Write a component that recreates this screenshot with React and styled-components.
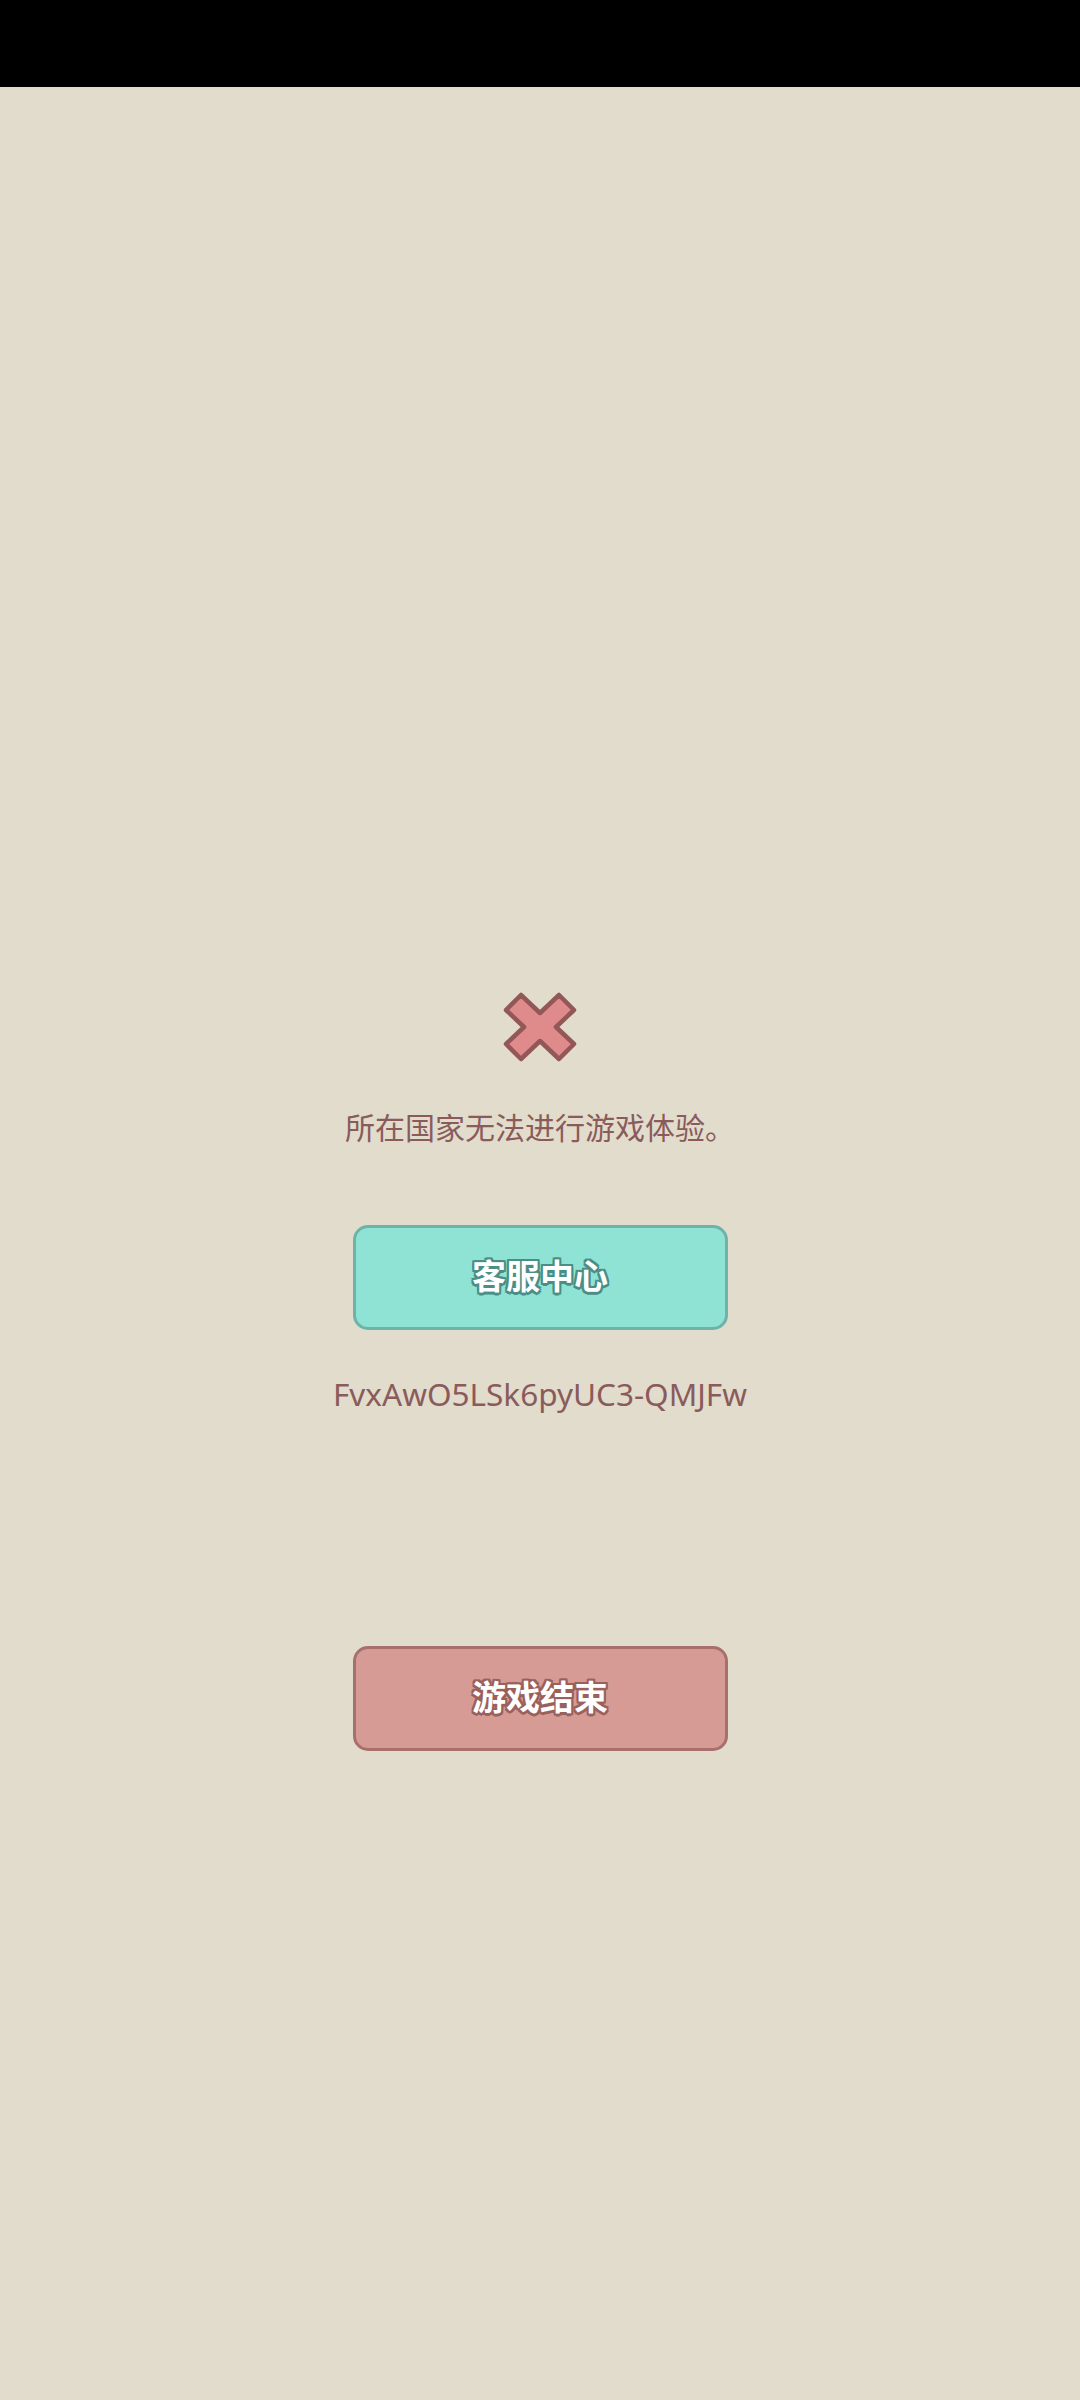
import styled, { createGlobalStyle } from 'styled-components'

const GlobalStyle = createGlobalStyle`
  html, body {
    margin: 0;
    padding: 0;
    background: #e2dccd;
  }
  body {
    font-family: "Noto Sans", "Noto Sans CJK SC", sans-serif;
  }
`

const Screen = styled.div`
  width: 1080px;
  height: 2400px;
  background: #e2dccd;
  display: flex;
  flex-direction: column;
  overflow: hidden;
`

const StatusBar = styled.div`
  height: 87px;
  background: #000;
  flex-shrink: 0;
`

const Content = styled.main`
  display: flex;
  flex-direction: column;
  align-items: center;
  padding-top: 903px;
`

const Message = styled.p`
  margin: 44px 0 0;
  font-family: "Noto Sans CJK SC", sans-serif;
  font-size: 30px;
  line-height: 36px;
  color: #8a5b5b;
`

const ActionButton = styled.button`
  box-sizing: border-box;
  width: 375px;
  height: 105px;
  margin-top: ${(p) => p.$top}px;
  padding: 0 0 7px;
  border: 3px solid ${(p) => p.$edge};
  border-radius: 15px;
  background: ${(p) => p.$fill};
  color: #fff;
  font-family: "Noto Sans CJK SC", sans-serif;
  font-weight: 700;
  font-size: 34px;
  cursor: pointer;
  display: flex;
  align-items: center;
  justify-content: center;
  text-shadow:
    2px 0 0 ${(p) => p.$ink}, -2px 0 0 ${(p) => p.$ink},
    0 2px 0 ${(p) => p.$ink}, 0 -2px 0 ${(p) => p.$ink},
    2px 2px 0 ${(p) => p.$ink}, -2px -2px 0 ${(p) => p.$ink},
    2px -2px 0 ${(p) => p.$ink}, -2px 2px 0 ${(p) => p.$ink},
    0 3px 0 ${(p) => p.$ink};
`

const DeviceId = styled.div`
  margin-top: 46px;
  font-family: "Noto Sans", sans-serif;
  font-size: 31.5px;
  line-height: 36px;
  color: #8a5b5b;
`

const CrossIcon = () => (
  <svg width="78" height="74" viewBox="0 0 78 74">
    <path
      d="M20 5 L39 23 L58 5 L73 20 L55 37 L73 54 L58 69 L39 51 L20 69 L5 54 L23 37 L5 20 Z"
      fill="#df8a8b"
      stroke="#935757"
      strokeWidth="4.5"
      strokeLinejoin="round"
    />
  </svg>
)

export default function App() {
  return (
    <>
      <GlobalStyle />
      <Screen>
        <StatusBar />
        <Content>
          <CrossIcon />
          <Message>所在国家无法进行游戏体验。</Message>
          <ActionButton $top={81} $fill="#8ee3d4" $edge="#6db3aa" $ink="#4b8e86">
            客服中心
          </ActionButton>
          <DeviceId>FvxAwO5LSk6pyUC3-QMJFw</DeviceId>
          <ActionButton $top={234} $fill="#d69b95" $edge="#a8706d" $ink="#99605c">
            游戏结束
          </ActionButton>
        </Content>
      </Screen>
    </>
  )
}
